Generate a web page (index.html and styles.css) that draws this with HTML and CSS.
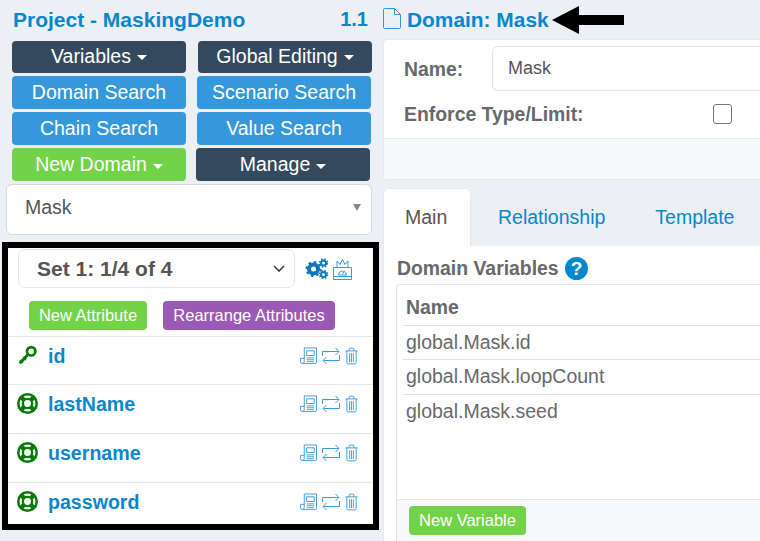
FILE: index.html
```html
<!DOCTYPE html>
<html lang="en">
<head>
<meta charset="utf-8">
<title>Project - MaskingDemo</title>
<link rel="stylesheet" href="styles.css">
</head>
<body>
<svg class="defs" width="0" height="0" aria-hidden="true">
  <symbol id="i-news" viewBox="0 0 18 18"><g fill="none" stroke="currentColor" stroke-width="1"><path d="M4.500 11.500V.5h13v15a1.500 1.500 0 0 1-1.500 1.500H2.500a2 2 0 0 1-2-2v-3.500h4v3.500a2 2 0 0 1-2 2"/><path d="M7 3.500h8v5H7z"/><path d="M7 11h8M7 13h8M7 15h8"/></g></symbol>
  <symbol id="i-swap" viewBox="0 0 18 18"><g fill="none" stroke="currentColor" stroke-width="1"><path d="M.5 9V4.500h16"/><path d="M13.500 1l3.500 3.500-3.500 3.500"/><path d="M17.500 8v5.500H1.500"/><path d="M4.500 10l-3.500 3.500 3.500 3.500"/></g></symbol>
  <symbol id="i-trash" viewBox="0 0 14 18"><g fill="none" stroke="currentColor" stroke-width="1"><path d="M.5 3.500h13M4.500 3.500v-2a1 1 0 0 1 1-1h3a1 1 0 0 1 1 1v2"/><path d="M2 3.500v12.500a1.500 1.500 0 0 0 1.500 1.500h7a1.500 1.500 0 0 0 1.500-1.500V3.500"/><path d="M5 6v9.500M7 6v9.500M9 6v9.500"/></g></symbol>
  <symbol id="i-ring" viewBox="0 0 20 20"><circle cx="10" cy="10" r="8.800" fill="none" stroke="#067a06" stroke-width="2.400"/><circle cx="10" cy="10" r="4.400" fill="none" stroke="#067a06" stroke-width="2.200"/><g stroke="#067a06" stroke-width="4.200"><path d="M3.500 3.500l3.500 3.500M16.500 3.500L13 7M3.500 16.500L7 13M16.500 16.500L13 13"/></g></symbol>
</svg>

<div class="page">
  <aside class="left">
    <header class="proj">
      <span>Project - MaskingDemo</span>
      <span class="ver">1.1</span>
    </header>
    <div class="btn-row first">
      <a class="btn dark">Variables <i class="caret"></i></a>
      <a class="btn dark">Global Editing <i class="caret"></i></a>
    </div>
    <div class="btn-row r2">
      <a class="btn blue">Domain Search</a>
      <a class="btn blue">Scenario Search</a>
    </div>
    <div class="btn-row r2">
      <a class="btn blue">Chain Search</a>
      <a class="btn blue">Value Search</a>
    </div>
    <div class="btn-row r3">
      <a class="btn green">New Domain <i class="caret"></i></a>
      <a class="btn dark">Manage <i class="caret"></i></a>
    </div>
    <div class="combo"><span>Mask</span><i class="combo-arrow"></i></div>

    <section class="attrs">
      <div class="set-row">
        <div class="set-select">
          <span>Set 1: 1/4 of 4</span>
          <svg class="chev" width="12" height="8" viewBox="0 0 12 8"><path d="M1 1l5 5 5-5" fill="none" stroke="#444" stroke-width="1.600"/></svg>
        </div>
        <svg class="gears" width="23" height="21" viewBox="0 0 23 21"><g fill="none" stroke="#0f76bd"><circle cx="8.500" cy="11" r="4.500" stroke-width="4"/><circle cx="8.500" cy="11" r="7" stroke-width="2" stroke-dasharray="2.500 3"/><circle cx="18.500" cy="5" r="2.500" stroke-width="2"/><circle cx="18.500" cy="5" r="4" stroke-width="1.500" stroke-dasharray="1.500 1.700"/><circle cx="18.500" cy="16.500" r="2.500" stroke-width="2"/><circle cx="18.500" cy="16.500" r="4" stroke-width="1.500" stroke-dasharray="1.500 1.700"/></g></svg>
        <svg class="gauge" width="19" height="21" viewBox="0 0 19 21"><g fill="none" stroke="#3a9bdc"><path d="M.5 8.500h18v12H.500z"/><path d="M.5 17.500h18"/><path d="M4 8V2l3 3.500L9.500.5 12 5.500 15 2v6"/><path d="M5.500 16a4 4 0 0 1 8 0z"/><path d="M9.500 15l1.500-2"/></g></svg>
      </div>
      <div class="attr-actions">
        <a class="btn-sm green">New Attribute</a>
        <a class="btn-sm purple">Rearrange Attributes</a>
      </div>
      <ul class="attr-list">
        <li class="attr">
          <svg class="lead" viewBox="0 0 20 20"><g fill="none" stroke="#067a06" stroke-width="2.600"><circle cx="13.500" cy="6" r="4"/><path d="M10.500 9L2.500 17.500M3 14.500l2.500 2.500M6 11.500l2.500 2.500"/></g></svg>
          <a class="attr-name">id</a>
          <span class="tools"><svg class="t-news"><use href="#i-news"/></svg><svg class="t-swap"><use href="#i-swap"/></svg><svg class="t-trash"><use href="#i-trash"/></svg></span>
        </li>
        <li class="attr">
          <svg class="lead"><use href="#i-ring"/></svg>
          <a class="attr-name">lastName</a>
          <span class="tools"><svg class="t-news"><use href="#i-news"/></svg><svg class="t-swap"><use href="#i-swap"/></svg><svg class="t-trash"><use href="#i-trash"/></svg></span>
        </li>
        <li class="attr">
          <svg class="lead"><use href="#i-ring"/></svg>
          <a class="attr-name">username</a>
          <span class="tools"><svg class="t-news"><use href="#i-news"/></svg><svg class="t-swap"><use href="#i-swap"/></svg><svg class="t-trash"><use href="#i-trash"/></svg></span>
        </li>
        <li class="attr">
          <svg class="lead"><use href="#i-ring"/></svg>
          <a class="attr-name">password</a>
          <span class="tools"><svg class="t-news"><use href="#i-news"/></svg><svg class="t-swap"><use href="#i-swap"/></svg><svg class="t-trash"><use href="#i-trash"/></svg></span>
        </li>
      </ul>
    </section>
  </aside>

  <main class="right">
    <header class="dom-title">
      <svg width="18" height="21" viewBox="0 0 18 21"><path d="M1.500.5h10l6 6v13a1 1 0 0 1-1 1h-15a1 1 0 0 1-1-1v-18a1 1 0 0 1 1-1zM11.500.5v6h6" fill="none" stroke="#2f96d8"/></svg>
      <span>Domain: Mask</span>
      <svg class="arrow" width="72" height="28" viewBox="0 0 72 28"><path d="M0 14L27 0v9h45v10H27v9z" fill="#000"/></svg>
    </header>
    <section class="form-card">
      <div class="form-body">
        <div class="f-name"><label>Name:</label><div class="f-input">Mask</div></div>
        <div class="f-check"><label>Enforce Type/Limit:</label><i class="checkbox"></i></div>
      </div>
      <div class="form-foot"></div>
    </section>
    <nav class="tabs">
      <a class="tab active">Main</a>
      <a class="tab">Relationship</a>
      <a class="tab">Template</a>
    </nav>
    <section class="tab-body">
      <h3>Domain Variables <svg width="23" height="23" viewBox="0 0 23 23"><circle cx="11.500" cy="11.500" r="11.500" fill="#0088cc"/><text x="11.500" y="18" text-anchor="middle" class="qm">?</text></svg></h3>
      <div class="var-box">
        <div class="var-table">
          <div class="var-head">Name</div>
          <div class="var-row">global.Mask.id</div>
          <div class="var-row">global.Mask.loopCount</div>
          <div class="var-row last">global.Mask.seed</div>
        </div>
        <div class="var-foot"><a class="btn-sm green">New Variable</a></div>
      </div>
    </section>
  </main>
</div>
</body>
</html>
```

FILE: styles.css
```css
* { box-sizing: border-box; }
html, body { margin: 0; padding: 0; height: 100%; overflow: hidden; }
body { background: #eceff4; font-family: "Liberation Sans", Arial, sans-serif; color: #676a6c; }
.defs { position: absolute; }
.page { display: flex; width: 760px; height: 541px; overflow: hidden; }
.left { width: 383px; flex: none; display: flex; flex-direction: column; }
.right { flex: 1; min-width: 0; }

.proj { height: 41px; padding: 8px 15px 0 13px; display: flex; justify-content: space-between; font-size: 21px; line-height: 23px; font-weight: bold; color: #0a87cb; }
.ver { font-size: 20px; }
.btn-row { display: flex; gap: 12px; padding-left: 12px; margin-bottom: 3px; }
.r2 { gap: 11px; }
.r3 { gap: 10px; }
.btn { width: 174px; height: 33px; border-radius: 4px; display: flex; align-items: center; justify-content: center; gap: 6px; color: #fff; font-size: 19.500px; white-space: nowrap; }
.first .btn { height: 32px; padding-bottom: 2px; }
.dark { background: #34495e; }
.blue { background: #3498db; }
.green { background: #72d348; }
.purple { background: #9b59b6; }
.caret { width: 0; height: 0; border: 5.500px solid transparent; border-top-color: #fff; border-bottom: 0; margin-top: 3px; }

.combo { margin-left: 6px; width: 366px; height: 51px; border: 1px solid #d5d8dc; border-radius: 6px; background: #fff; display: flex; align-items: center; justify-content: space-between; padding: 0 10px 4px 18px; font-size: 19.500px; color: #555; }
.combo-arrow { width: 0; height: 0; border: 4px solid transparent; border-top: 7px solid #888; border-bottom: 0; }

.attrs { margin: 7px 0 0 2px; width: 377px; height: 288px; border: 6px solid #000; background: #fff; }
.set-row { display: flex; align-items: center; padding: 1px 0 0 10px; height: 40px; }
.set-select { width: 277px; height: 39px; border: 1px solid #e4e6e8; border-radius: 7px; display: flex; align-items: center; justify-content: space-between; padding: 0 9px 0 18px; font-size: 21px; font-weight: bold; color: #555; }
.gears { margin-left: 10px; }
.gauge { margin-left: 5px; margin-top: 1px; }
.attr-actions { display: flex; gap: 16px; padding: 13px 0 0 21px; height: 48px; }
.btn-sm { height: 29px; border-radius: 4px; display: inline-flex; align-items: center; justify-content: center; color: #fff; font-size: 16.500px; white-space: nowrap; }
.attr-actions .green { width: 118px; }
.attr-actions .purple { width: 172px; }
.attr-list { list-style: none; margin: 0; padding: 0; }
.attr { height: 49px; border-top: 1px solid #e4e6e8; display: flex; align-items: flex-start; padding: 8px 15px 0 9px; }
.attr:first-child { height: 48px; }
.lead { width: 21px; height: 21px; flex: none; }
.attr-name { margin-left: 10px; font-size: 19.600px; line-height: 23px; font-weight: bold; color: #0a87cb; }
.tools { margin-left: auto; display: flex; gap: 5px; color: #3a9bdc; padding-top: 2px; }
.t-news { width: 17px; height: 18px; }
.t-swap { width: 18px; height: 18px; }
.t-trash { width: 13px; height: 18px; }

.dom-title { height: 39px; padding-top: 8px; display: flex; align-items: flex-start; font-size: 20.900px; line-height: 23px; font-weight: bold; color: #0a87cb; position: relative; }
.dom-title span { margin-left: 6px; }
.arrow { position: absolute; left: 169px; top: 6px; }
.form-card { border: 1px solid #e7eaec; border-right: 0; border-radius: 4px 0 0 4px; background: #fff; height: 141px; }
.form-body { height: 98px; padding: 6px 0 0 20px; }
.f-name { display: flex; align-items: center; height: 45px; }
.f-name label, .f-check label { font-size: 19.400px; font-weight: bold; color: #676a6c; }
.f-name label { width: 88px; flex: none; margin-top: 1px; }
.f-input { flex: 1; height: 45px; border: 1px solid #e4e6e8; border-radius: 6px 0 0 6px; border-right: 0; padding: 0 0 1px 15px; font-size: 18px; color: #555; display: flex; align-items: center; }
.f-check { display: flex; align-items: center; height: 46px; }
.f-check label { width: 309px; flex: none; }
.checkbox { width: 19px; height: 20px; border: 1px solid #767676; border-radius: 3px; background: #fff; }
.form-foot { height: 41px; background: #f8f9fb; border-top: 1px solid #e7eaec; }

.tabs { display: flex; height: 59px; margin-top: 8px; border-bottom: 1px solid #e2e5e9; }
.tab { font-size: 19.500px; color: #0a87cb; padding: 18px 0 0 27px; margin-right: 1px; }
.tab:nth-child(3) { padding-left: 49px; }
.tab.active { width: 88px; height: 59px; padding-left: 21px; padding-top: 17px; background: #fff; color: #555; border-radius: 6px 6px 0 0; margin-right: 0; border: 1px solid #e7eaec; border-bottom: 0; }
.tab-body { background: #fff; height: 300px; padding: 7px 0 0 12px; border-left: 1px solid #e7eaec; margin-top: -1px; }
.tab-body h3 { margin: 0 0 1px 1px; height: 30px; display: flex; align-items: center; gap: 6px; font-size: 19.400px; font-weight: bold; color: #676a6c; }
.qm { fill: #fff; font-size: 19px; font-weight: bold; font-family: "Liberation Sans", Arial, sans-serif; }
.var-box { border: 1px solid #e4e6e8; border-right: 0; border-radius: 4px 0 0 0; height: 260px; }
.var-table { height: 215px; padding-left: 6px; border-bottom: 1px solid #e4e6e8; }
.var-head { height: 40px; padding: 10px 0 0 3px; font-size: 19.400px; font-weight: bold; line-height: 24px; }
.var-row { height: 34px; border-top: 1px solid #dcdfe3; padding: 4px 0 0 3px; font-size: 19.500px; line-height: 24px; }
.var-row:nth-child(3), .var-row.last { height: 35px; }
.var-foot { background: #f8f9fb; height: 44px; padding: 6px 0 0 12px; }
.var-foot .btn-sm { width: 117px; }
```
